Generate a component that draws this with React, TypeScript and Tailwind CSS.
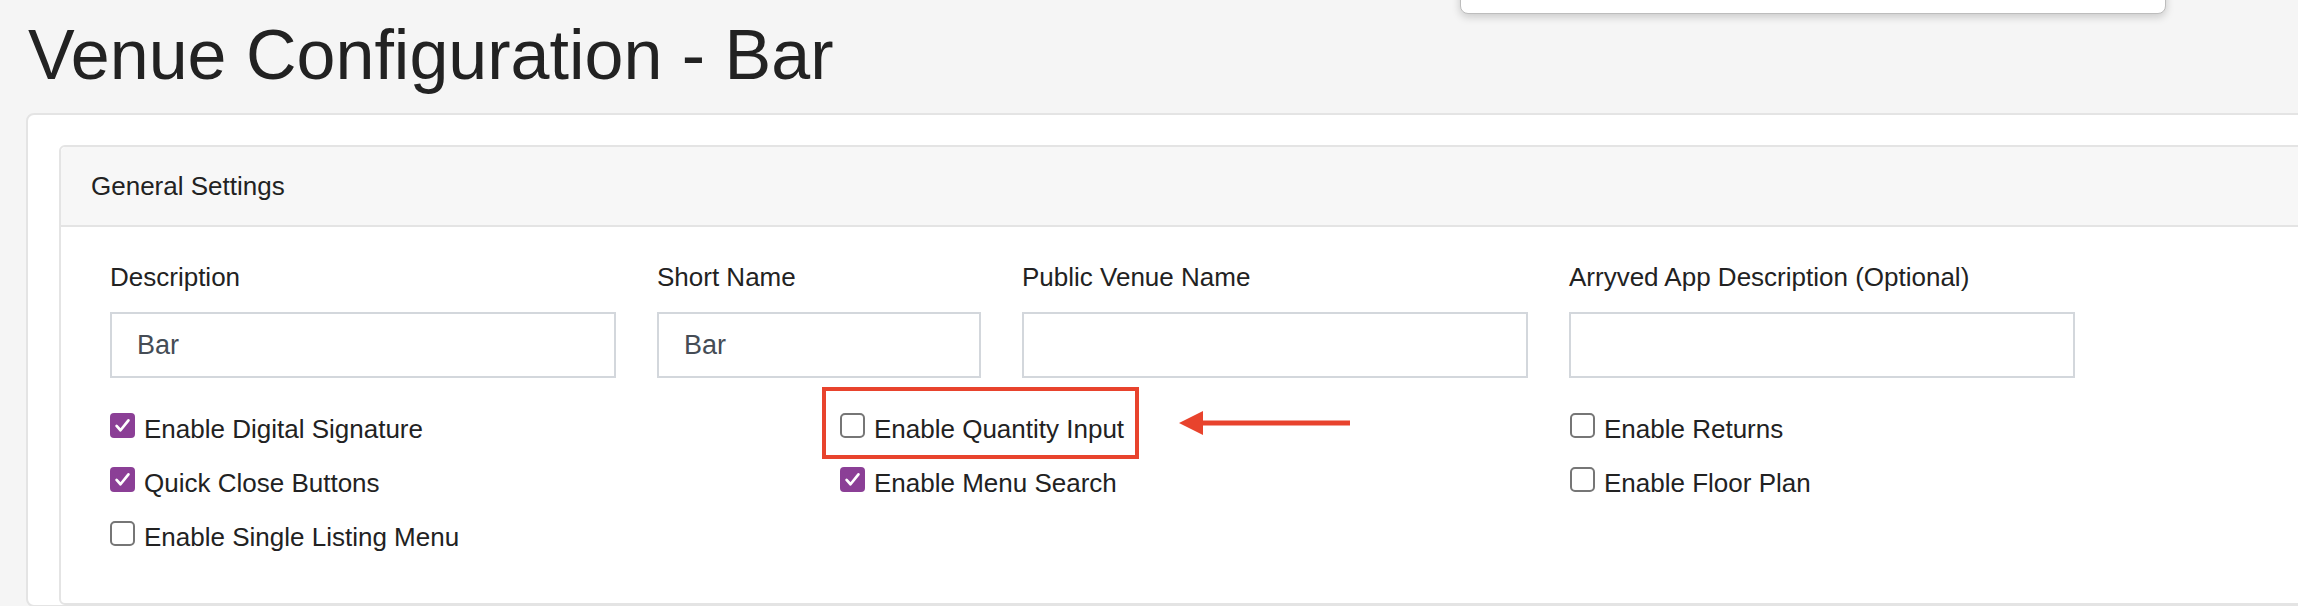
import React from 'react';

type Opt = { label: string; checked: boolean; flagged?: boolean };

const columns: Opt[][] = [
  [
    { label: 'Enable Digital Signature', checked: true },
    { label: 'Quick Close Buttons', checked: true },
    { label: 'Enable Single Listing Menu', checked: false },
  ],
  [
    { label: 'Enable Quantity Input', checked: false, flagged: true },
    { label: 'Enable Menu Search', checked: true },
  ],
  [
    { label: 'Enable Returns', checked: false },
    { label: 'Enable Floor Plan', checked: false },
  ],
];

const fields = [
  { label: 'Description', value: 'Bar' },
  { label: 'Short Name', value: 'Bar' },
  { label: 'Public Venue Name', value: '' },
  { label: 'Arryved App Description (Optional)', value: '' },
];

function Box({ checked }: { checked: boolean }) {
  if (checked) {
    return (
      <span className="mt-[-1px] flex h-[25px] w-[25px] shrink-0 items-center justify-center rounded-[4px] bg-[#8b3f96]">
        <svg viewBox="0 0 24 24" className="h-[19px] w-[19px]">
          <path d="M4.5 12.5l5 5.5L19.5 5.5" fill="none" stroke="#fff" strokeWidth="3.4" strokeLinecap="round" strokeLinejoin="round" />
        </svg>
      </span>
    );
  }
  return <span className="mt-[-1px] block h-[25px] w-[25px] shrink-0 rounded-[5px] border-2 border-[#767676] bg-white" />;
}

function Option({ opt }: { opt: Opt }) {
  return (
    <div className="relative flex items-start gap-[9px] leading-[30px]">
      <Box checked={opt.checked} />
      <span>{opt.label}</span>
      {opt.flagged && (
        <>
          {/* annotation: red outline + arrow */}
          <div className="absolute left-[-18px] top-[-27px] h-[72px] w-[317px] border-[4px] border-[#e8432d]" />
          <svg className="absolute left-[339px] top-[-3px]" width="172" height="24" viewBox="0 0 172 24">
            <path d="M0 12 L24 0 L24 9.5 L171 9.5 L171 14.5 L24 14.5 L24 24 Z" fill="#e8432d" />
          </svg>
        </>
      )}
    </div>
  );
}

export default function App() {
  return (
    <div
      className="relative h-[606px] w-[2298px] overflow-hidden bg-[#f5f5f5] text-[#222]"
      style={{ fontFamily: '"Liberation Sans", Arial, Helvetica, sans-serif' }}
    >
      {/* dropdown peeking from the top */}
      <div className="absolute left-[1460px] top-[-20px] h-[34px] w-[706px] rounded-b-[8px] border border-[#bdbdbd] bg-white shadow-[0_3px_8px_rgba(0,0,0,0.18)]" />

      <h1 className="pl-[28px] pt-[20px] text-[70px] leading-[70px] font-normal">Venue Configuration - Bar</h1>

      <div className="ml-[26px] mt-[23px] w-[2320px] rounded-[8px] border-2 border-[#e4e4e4] bg-white pl-[31px] pt-[30px]">
        <div className="h-[460px] rounded-[6px] border-2 border-[#e4e4e4]">
          <div className="flex h-[80px] items-center rounded-t-[5px] border-b-2 border-[#e4e4e4] bg-[#f7f7f7] pl-[30px] text-[26px]">
            General Settings
          </div>

          <div className="pl-[49px] pt-[35px]">
            <div className="grid grid-cols-[506px_324px_506px_506px] gap-x-[41px]">
              {fields.map((f) => (
                <div key={f.label}>
                  <label className="mb-[20px] block text-[26px] leading-[30px]">{f.label}</label>
                  <div className="flex h-[66px] items-center border-2 border-[#d3d7dc] pl-[25px] text-[27px] text-[#454c55]">
                    {f.value}
                  </div>
                </div>
              ))}
            </div>

            <div className="mt-[36px] grid grid-cols-[689px_689px_689px] gap-x-[41px] text-[26px]">
              {columns.map((col, i) => (
                <div key={i} className="flex flex-col gap-[24px]">
                  {col.map((o) => (
                    <Option key={o.label} opt={o} />
                  ))}
                </div>
              ))}
            </div>
          </div>
        </div>
      </div>
    </div>
  );
}
